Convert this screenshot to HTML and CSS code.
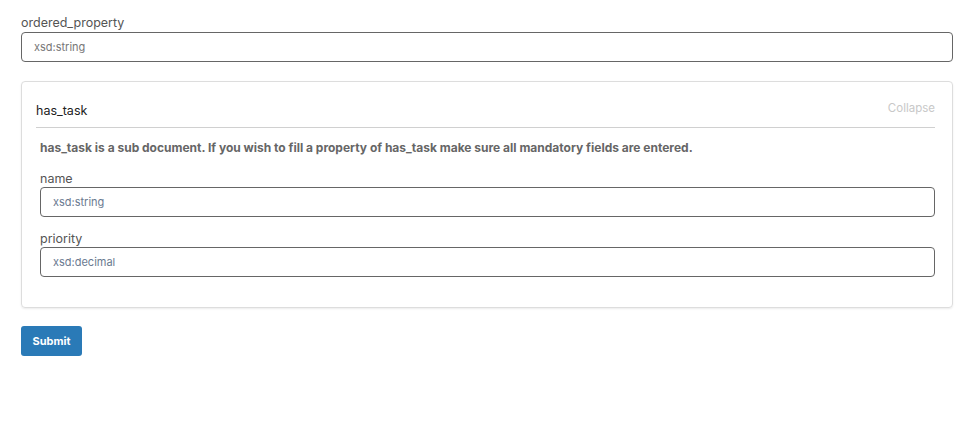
FILE: index.html
```html
<!DOCTYPE html>
<html>
<head>
<meta charset="utf-8">
<link rel="stylesheet" href="styles.css">
</head>
<body>
<div class="page">
  <div class="field">
    <label class="label">ordered_property</label>
    <input class="input" type="text" placeholder="xsd:string">
  </div>
  <div class="card">
    <div class="card-head">
      <span class="card-title">has_task</span>
      <span class="collapse">Collapse</span>
    </div>
    <p class="note">has_task is a sub document. If you wish to fill a property of has_task make sure all mandatory fields are entered.</p>
    <div class="field">
      <label class="label">name</label>
      <input class="input sub" type="text" placeholder="xsd:string">
    </div>
    <div class="field">
      <label class="label">priority</label>
      <input class="input sub" type="text" placeholder="xsd:decimal">
    </div>
  </div>
  <button class="submit">Submit</button>
</div>
</body>
</html>
```
FILE: styles.css
```css
* { box-sizing: border-box; }
body {
  margin: 0;
  font-family: Inter, "Noto Sans", sans-serif;
  color: #212529;
  background: #fff;
}
.page {
  padding: 15px 10px 0 21px;
  display: flex;
  flex-direction: column;
  align-items: flex-start;
}
.field {
  display: flex;
  flex-direction: column;
  width: 100%;
}
.label {
  font-size: 12.5px;
  color: #555;
  line-height: 16px;
  margin-bottom: 2px;
}
.page > .field .label { line-height: 15px; }
.input {
  width: 100%;
  height: 30px;
  border: 1px solid #666;
  border-radius: 4px;
  padding: 0 12px;
  font-family: inherit;
  font-size: 11px;
  color: #333;
  outline: none;
}
.input::placeholder { color: #777; }
.input.sub::placeholder { color: #6a7a90; }
.card {
  margin-top: 19px;
  width: 100%;
  border: 1px solid #ddd;
  border-radius: 4px;
  box-shadow: 0 1px 2px rgba(0,0,0,0.08);
  padding: 19px 17px 30px 14px;
}
.card-head {
  display: flex;
  justify-content: space-between;
  align-items: center;
  border-bottom: 1px solid #d0d0d0;
  padding-bottom: 8px;
  height: 27px;
}
.card-title {
  font-size: 12.5px;
  color: #222;
}
.collapse {
  font-size: 11.5px;
  color: #c8c8c8;
  margin-top: -4px;
}
.note {
  margin: 12px 0 17px 4px;
  font-size: 12px;
  font-weight: 700;
  color: #666;
}
.card .field {
  padding-left: 4px;
  margin-bottom: 15px;
}
.card .label {
  line-height: 13px;
  margin-bottom: 2px;
}
.card .field:last-child { margin-bottom: 0; }
.submit {
  margin-top: 18px;
  height: 30px;
  width: 61px;
  background: #2a7ab7;
  border: none;
  border-radius: 3px;
  color: #fff;
  font-family: inherit;
  font-size: 11px;
  font-weight: 700;
}
```
